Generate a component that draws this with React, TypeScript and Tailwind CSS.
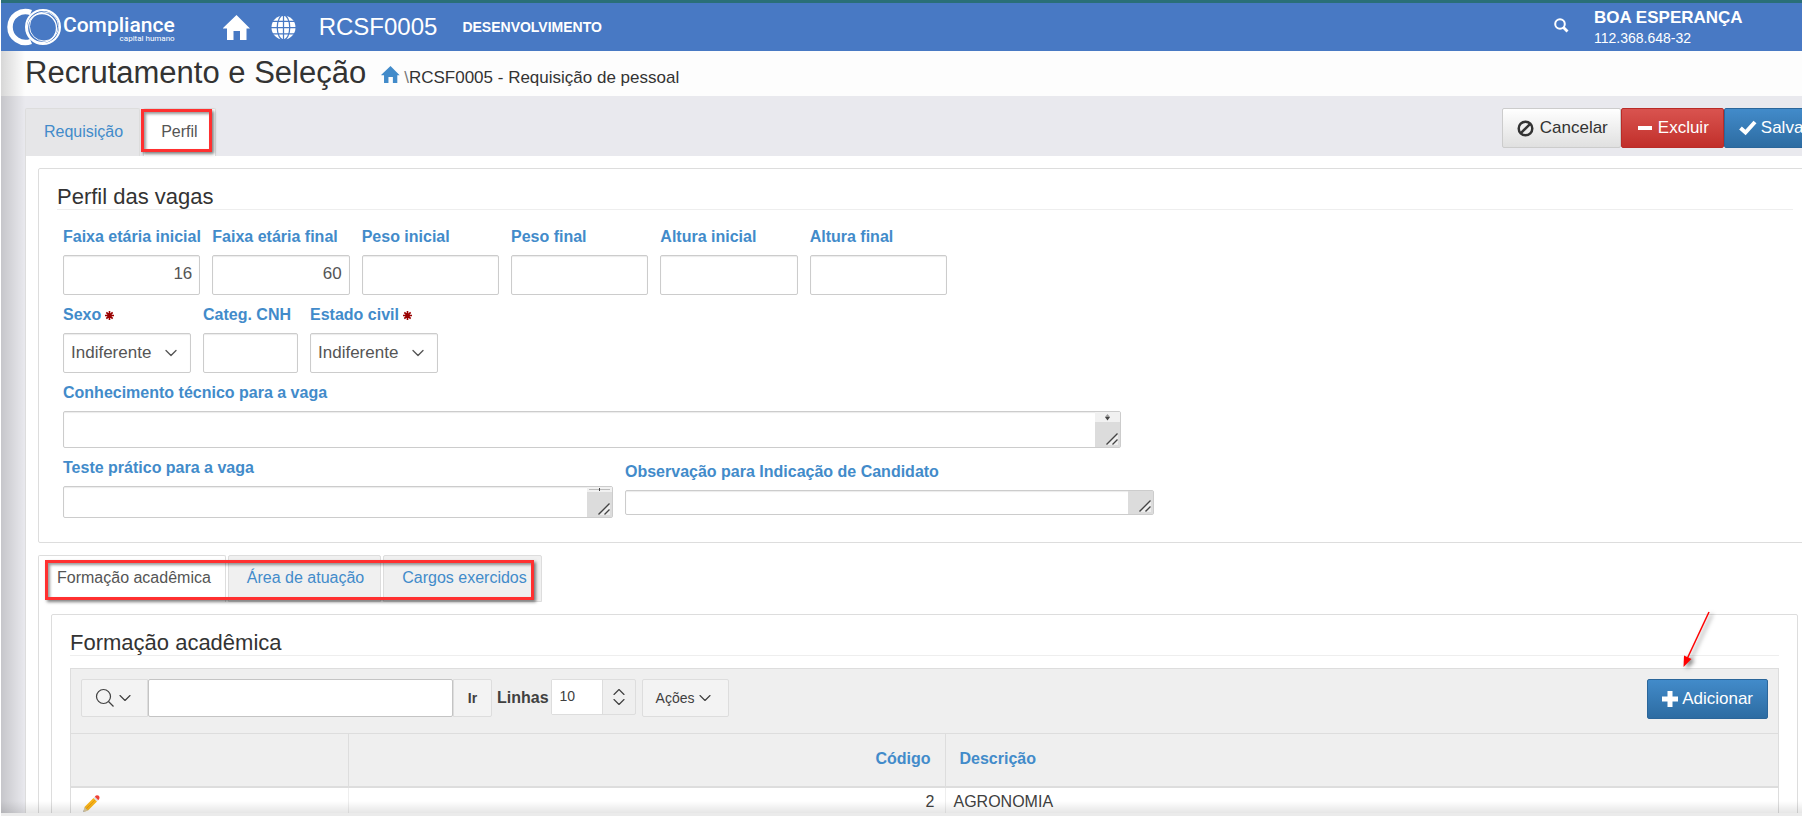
import React from "react";
import { ChevronDown, ChevronUp } from "lucide-react";

type Row = {
    id: number;
    descricao: string;
};

const rows: Row[] = [{ id: 2, descricao: "AGRONOMIA" }];

const faixas = [
    { id: "idade-inicial", label: "Faixa etária inicial", value: "16" },
    { id: "idade-final", label: "Faixa etária final", value: "60" },
    { id: "peso-inicial", label: "Peso inicial", value: "" },
    { id: "peso-final", label: "Peso final", value: "" },
    { id: "altura-inicial", label: "Altura inicial", value: "" },
    { id: "altura-final", label: "Altura final", value: "" },
];

const labelClass = "block text-base leading-5 font-bold text-[#428bca] whitespace-nowrap";
const fieldClass = "block w-full rounded-xs border border-[#ccc] bg-white text-[#555] shadow-[inset_0_1px_1px_rgba(0,0,0,0.08)]";
const buttonClass = "flex h-10 items-center rounded-xs border text-[17px] leading-6 whitespace-nowrap";

function HomeIcon({ className }: { className: string }) {
    return (
        <svg viewBox="0 0 27 25" className={className} fill="currentColor" aria-hidden="true">
            <path d="M13.500 0 27 13.500H23.500V25H17V16H10.500V25H4V13.500H0L0 13Z" />
        </svg>
    );
}

function GlobeIcon() {
    return (
        <svg viewBox="0 0 26 26" className="h-[25px] w-[25px]" aria-hidden="true">
            <circle cx="13" cy="13" r="12.500" fill="#fff" />
            <g fill="none" stroke="#4879c4" strokeWidth="1.300">
                <ellipse cx="13" cy="13" rx="6.500" ry="13" />
                <path d="M13 0V26M0 13H26M2 6.500H24M2 19.500H24" />
            </g>
        </svg>
    );
}

function Logo() {
    return (
        <a href="#inicio" className="flex items-center gap-0.5 text-white">
            <svg viewBox="0 0 56 38" className="h-[38px] w-[56px]" fill="none" aria-hidden="true">
                <path d="M26 4.500A15.500 15.500 0 1 0 26 33.500" stroke="#fff" strokeWidth="5.500" />
                <circle cx="38" cy="19" r="17" fill="#4879c4" stroke="#fff" strokeWidth="2" />
                <circle cx="37" cy="20" r="14.500" stroke="#fff" strokeWidth="1.300" />
                <circle cx="39" cy="18.500" r="14.500" stroke="#fff" strokeWidth="0.900" />
            </svg>
            <span className="flex flex-col items-end pt-1 font-[Roboto,sans-serif]">
                <span className="text-[21px] leading-5 font-medium">Compliance</span>
                <span className="text-[8px] leading-2">capital humano</span>
            </span>
        </a>
    );
}

function Required() {
    return (
        <svg viewBox="0 0 10 10" className="ml-1 inline-block h-[9px] w-[9px]" stroke="#900" strokeWidth="1.800" aria-hidden="true">
            <path d="M5 0V10M0 5H10M1.500 1.500 8.500 8.500M8.500 1.500 1.500 8.500" />
        </svg>
    );
}

function SelectField({ id, label }: { id: string; label: string }) {
    return (
        <div className="w-32">
            <label htmlFor={id} className={labelClass}>
                {label}
                <Required />
            </label>
            <div className="relative mt-2">
                <select id={id} className={`${fieldClass} h-10 appearance-none pl-[7px] text-[17px]`}>
                    <option>Indiferente</option>
                </select>
                <ChevronDown className="pointer-events-none absolute top-2.5 right-2.5 h-5 w-5 text-[#555]" strokeWidth={1.6} />
            </div>
        </div>
    );
}

type AreaProps = {
    id: string;
    label: string;
    width: string;
    height: string;
    arrows?: "full" | "thin";
};

function AreaField({ id, label, width, height, arrows }: AreaProps) {
    return (
        <div className={width}>
            <label htmlFor={id} className={labelClass}>{label}</label>
            <div className="relative mt-2">
                <textarea id={id} className={`${fieldClass} ${height} resize-none overflow-hidden`} />
                <div className="pointer-events-none absolute top-px right-px bottom-px flex w-[25px] flex-col justify-between bg-[#dcdcdc]">
                    {arrows === "full" && (
                        <svg viewBox="0 0 25 10" className="h-[10px] w-full" aria-hidden="true">
                            <rect width="25" height="10" fill="#f1f1f1" />
                            <path d="M12.500 2 15 5H10Z" fill="#999" />
                            <path d="M10 5H15L12.500 8.500Z" fill="#444" />
                        </svg>
                    )}
                    {arrows === "thin" && (
                        <svg viewBox="0 0 25 5" className="h-[5px] w-full" aria-hidden="true">
                            <rect width="25" height="5" fill="#f1f1f1" />
                            <path d="M2 2.500H23" stroke="#bbb" />
                            <path d="M12.500 1V4" stroke="#444" />
                        </svg>
                    )}
                    <svg viewBox="0 0 14 14" className="mt-auto mr-px mb-px ml-auto h-[14px] w-[14px]" aria-hidden="true">
                        <path d="M2 13 13 2V13Z" fill="#eee" />
                        <path d="M1.500 12.500 12.500 1.500M7.500 12.500 12.500 7.500" stroke="#444" strokeWidth="1.400" />
                    </svg>
                </div>
            </div>
        </div>
    );
}

function Pencil() {
    return (
        <svg viewBox="0 0 20 20" className="h-5 w-5" aria-hidden="true">
            <path d="M2 18 4 13 7 16Z" fill="#999" />
            <path d="M3.500 13 7 16.500 3.500 18 2.500 17Z" fill="#dccba0" />
            <path d="M3.500 13 12.500 4 16 7.500 7 16.500Z" fill="#f9b418" />
            <path d="M5.500 14.500 14 6" stroke="#e39a10" />
            <path d="M12.500 4 13.800 2.700 17.300 6.200 16 7.500Z" fill="#ddd" />
            <path d="M13.800 2.700Q15.500.500 17.800 1.800 19.500 4 17.300 6.200Z" fill="#ef4136" />
        </svg>
    );
}

export default function App() {
    return (
        <div className="relative flex h-screen flex-col overflow-hidden border-l border-white bg-[#e9e9ee] font-['Liberation_Sans',Arial,sans-serif] text-[#333]">
            <header className="flex h-[51px] shrink-0 items-center border-t-3 border-[#2a6f78] bg-[#4879c4] pl-1 text-white">
                <Logo />
                <a href="#home" className="ml-12" aria-label="Início"><HomeIcon className="h-[25px] w-[27px]" /></a>
                <a href="#portal" className="ml-[21px]" aria-label="Portal"><GlobeIcon /></a>
                <span className="ml-[23px] text-2xl">RCSF0005</span>
                <strong className="ml-[25px] text-sm">DESENVOLVIMENTO</strong>
                <button type="button" className="mb-1 ml-auto" aria-label="Pesquisar">
                    <svg viewBox="0 0 15 15" className="h-[15px] w-[15px]" fill="none" stroke="currentColor" aria-hidden="true">
                        <circle cx="6" cy="6" r="4.800" strokeWidth="2" />
                        <path d="M9.500 9.500 13.500 13.500" strokeWidth="2.800" />
                    </svg>
                </button>
                <div className="ml-[25px] w-[208px] pt-0.5">
                    <p className="text-[17px] leading-5 font-bold">BOA ESPERANÇA</p>
                    <p className="text-sm leading-5">112.368.648-32</p>
                </div>
            </header>

            <div className="flex h-[45px] shrink-0 items-baseline bg-[#fdfdfd] pl-6">
                <h1 className="text-[31px] leading-11">Recrutamento e Seleção</h1>
                <nav className="ml-[15px] flex items-baseline text-[17px]">
                    <a href="#home" className="text-[#428bca]" aria-label="Início"><HomeIcon className="h-[17px] w-[19px]" /></a>
                    <span className="ml-1 text-[#777]">\</span>
                    <span>RCSF0005 - Requisição de pessoal</span>
                </nav>
            </div>

            <div className="flex h-[60px] shrink-0 items-end pl-6">
                <div role="tablist" className="relative flex h-12 gap-[3px]">
                    <button type="button" role="tab" className="rounded-t-xs border border-b-0 border-[#ddd] bg-[#e6e6e8] pr-4 pl-[18px] pb-0.5 text-[#428bca]">Requisição</button>
                    <button type="button" role="tab" aria-selected="true" className="rounded-t-xs border border-b-0 border-[#ddd] bg-white px-[17px] pb-0.5 text-[#555]">Perfil</button>
                    <div className="pointer-events-none absolute top-px right-1 bottom-1 w-[71px] border-3 border-[#ff3030] shadow-[2px_2px_3px_rgba(0,0,0,0.5),inset_2px_2px_3px_rgba(0,0,0,0.4)]" />
                </div>
                <div className="-mr-6 mb-2 ml-auto flex">
                    <button type="button" className={`${buttonClass} gap-1.5 border-[#ccc] bg-linear-to-b from-white to-[#e0e0e0] pr-3 pl-3.5`}>
                        <svg viewBox="0 0 18 18" className="h-[17px] w-[17px]" fill="none" stroke="currentColor" strokeWidth="2.600" aria-hidden="true">
                            <circle cx="9" cy="9" r="7.200" />
                            <path d="M4 14 14 4" />
                        </svg>
                        Cancelar
                    </button>
                    <button type="button" className={`${buttonClass} gap-1.5 border-[#b92c28] bg-linear-to-b from-[#d9534f] to-[#c12e2a] pr-3.5 pl-4 text-white`}>
                        <span className="h-1 w-[14px] bg-white" />
                        Excluir
                    </button>
                    <button type="button" className={`${buttonClass} gap-1 border-[#2b669a] bg-linear-to-b from-[#428bca] to-[#2d6ca2] pr-4 pl-3.5 text-white`}>
                        <svg viewBox="0 0 18 16" className="h-4 w-[18px]" fill="none" stroke="currentColor" strokeWidth="4" aria-hidden="true">
                            <path d="M1.500 8 6.500 12.500 16 2" />
                        </svg>
                        Salvar
                    </button>
                </div>
            </div>

            <main className="ml-6 min-h-0 flex-1 border-l border-[#ddd] bg-white pt-3 pl-3">
                <section className="-mr-[13px] rounded-xs border border-[#ddd] pt-4 pr-[21px] pb-6 pl-[18px]">
                    <h2 className="border-b border-[#eee] text-[22px] leading-6">Perfil das vagas</h2>
                    <div className="flex flex-col gap-2.5 pt-[17px] pl-1.5">
                        <div className="grid w-[884px] grid-cols-6 gap-3">
                            {faixas.map((faixa) => (
                                <div key={faixa.id}>
                                    <label htmlFor={faixa.id} className={labelClass}>{faixa.label}</label>
                                    <input id={faixa.id} defaultValue={faixa.value} className={`${fieldClass} mt-2 h-10 px-[7px] pb-0.5 text-right text-[17px]`} />
                                </div>
                            ))}
                        </div>
                        <div className="flex gap-3">
                            <SelectField id="sexo" label="Sexo" />
                            <div className="w-[95px]">
                                <label htmlFor="cnh" className={labelClass}>Categ. CNH</label>
                                <input id="cnh" className={`${fieldClass} mt-2 h-10 px-2`} />
                            </div>
                            <SelectField id="estado-civil" label="Estado civil" />
                        </div>
                        <AreaField id="conhecimento" label="Conhecimento técnico para a vaga" width="w-[1058px]" height="h-[37px]" arrows="full" />
                        <div className="flex items-center gap-3">
                            <AreaField id="teste" label="Teste prático para a vaga" width="w-[550px]" height="h-8" arrows="thin" />
                            <AreaField id="observacao" label="Observação para Indicação de Candidato" width="w-[529px]" height="h-[25px]" />
                        </div>
                    </div>
                </section>

                <div role="tablist" className="relative mt-3 flex h-[47px] w-fit gap-0.5">
                    <button type="button" role="tab" aria-selected="true" className="rounded-t-xs border border-b-0 border-[#ddd] bg-white pr-3.5 pl-[18px] pb-0.5 text-[#555]">Formação acadêmica</button>
                    <button type="button" role="tab" className="rounded-t-xs border border-[#ddd] bg-[#f0f0f0] pr-4 pl-[18px] pb-0.5 text-[#428bca]">Área de atuação</button>
                    <button type="button" role="tab" className="rounded-t-xs border border-[#ddd] bg-[#f0f0f0] pr-3.5 pl-[18px] pb-0.5 text-[#428bca]">Cargos exercidos</button>
                    <div className="pointer-events-none absolute top-[5px] right-2 bottom-0.5 left-[7px] border-3 border-[#ff3030] shadow-[2px_2px_3px_rgba(0,0,0,0.5),inset_2px_2px_3px_rgba(0,0,0,0.4)]" />
                </div>

                <div className="border-l border-[#ddd] pt-3 pr-1 pl-3">
                    <section className="relative rounded-xs border border-[#ddd] px-[18px] pt-4">
                        <h2 className="border-b border-[#eee] text-[22px] leading-6">Formação acadêmica</h2>
                        <svg viewBox="0 0 34 60" className="pointer-events-none absolute -top-1 right-[83px] h-[60px] w-[34px] drop-shadow-[3px_2px_2px_rgba(0,0,0,0.5)]" aria-hidden="true">
                            <path d="M29 1 7 48" stroke="red" strokeWidth="1.500" />
                            <path d="M3.500 56 4 44.500 11.500 48Z" fill="red" />
                        </svg>
                        <div className="mt-3 border border-[#ddd] bg-[#efefef] text-sm text-[#404040]">
                            <div className="flex h-16 items-start px-2.5 pt-2.5">
                                <button type="button" className="flex h-[38px] w-[67px] items-center justify-center rounded-l-xs border border-[#ddd] bg-[#f3f3f3]" aria-label="Pesquisar colunas">
                                    <svg viewBox="0 0 20 20" className="h-5 w-5" fill="none" stroke="currentColor" strokeWidth="1.200" aria-hidden="true">
                                        <circle cx="8.500" cy="8.500" r="7" />
                                        <path d="M13.500 13.500 18.500 18.500" />
                                    </svg>
                                    <ChevronDown className="h-5 w-5" strokeWidth={1.4} />
                                </button>
                                <input aria-label="Pesquisar" className="h-[38px] w-[305px] rounded-xs border border-[#c4c4c4] bg-white px-2" />
                                <button type="button" className="h-[38px] w-[39px] rounded-r-xs border border-[#ddd] bg-[#f3f3f3] font-bold">Ir</button>
                                <label htmlFor="linhas" className="ml-[5px] text-base leading-[38px] font-bold">Linhas</label>
                                <div className="ml-0.5 flex h-9 rounded-xs border border-[#ddd]">
                                    <input id="linhas" defaultValue="10" className="w-[50px] bg-white px-2 pb-0.5" />
                                    <button type="button" className="flex w-[33px] flex-col items-center justify-center border-l border-[#ddd]" aria-label="Alterar linhas">
                                        <ChevronUp className="h-[10px] w-5" strokeWidth={1.4} preserveAspectRatio="xMidYMid slice" />
                                        <ChevronDown className="h-[10px] w-5" strokeWidth={1.4} preserveAspectRatio="xMidYMid slice" />
                                    </button>
                                </div>
                                <button type="button" className="ml-1.5 flex h-[38px] w-[87px] items-center justify-center rounded-xs border border-[#ddd] bg-[#f3f3f3]">
                                    Ações
                                    <ChevronDown className="h-5 w-5" strokeWidth={1.4} />
                                </button>
                                <button type="button" className={`${buttonClass} ml-auto gap-1 border-[#2b669a] bg-linear-to-b from-[#428bca] to-[#2d6ca2] px-3.5 text-white`}>
                                    <svg viewBox="0 0 16 16" className="h-4 w-4" stroke="currentColor" strokeWidth="5" aria-hidden="true">
                                        <path d="M8 0V16M0 8H16" />
                                    </svg>
                                    Adicionar
                                </button>
                            </div>
                            <table className="w-full table-fixed border-collapse text-base">
                                <colgroup>
                                    <col className="w-[277px]" />
                                    <col className="w-[597px]" />
                                    <col />
                                </colgroup>
                                <thead>
                                    <tr className="h-[53px] border-t border-b-2 border-[#ddd] text-[#428bca]">
                                        <th className="border-r border-[#ddd]" aria-label="Editar" />
                                        <th className="border-r border-[#ddd] pr-3.5 pb-0.5 text-right">Código</th>
                                        <th className="pb-0.5 pl-3.5 text-left">Descrição</th>
                                    </tr>
                                </thead>
                                <tbody>
                                    {rows.map((row) => (
                                        <tr key={row.id} className="bg-white">
                                            <td className="border-r border-[#eee] pt-1.5 pl-2.5">
                                                <a href="#editar" className="block w-5" aria-label="Editar"><Pencil /></a>
                                            </td>
                                            <td className="border-r border-[#eee] pt-0.5 pr-2.5 text-right">{row.id}</td>
                                            <td className="pt-0.5 pl-2">{row.descricao}</td>
                                        </tr>
                                    ))}
                                </tbody>
                            </table>
                        </div>
                    </section>
                </div>
            </main>

            {/* shadows along the window's edges */}
            <div className="pointer-events-none absolute top-[51px] bottom-0 left-0 w-6 bg-linear-to-r from-black/15 to-transparent" />
            <div className="pointer-events-none absolute right-0 bottom-[3px] left-0 h-3 bg-linear-to-t from-black/10 to-transparent" />
            <footer className="absolute right-0 bottom-0 left-0 h-[3px] bg-[#ebebeb]" />
        </div>
    );
}
